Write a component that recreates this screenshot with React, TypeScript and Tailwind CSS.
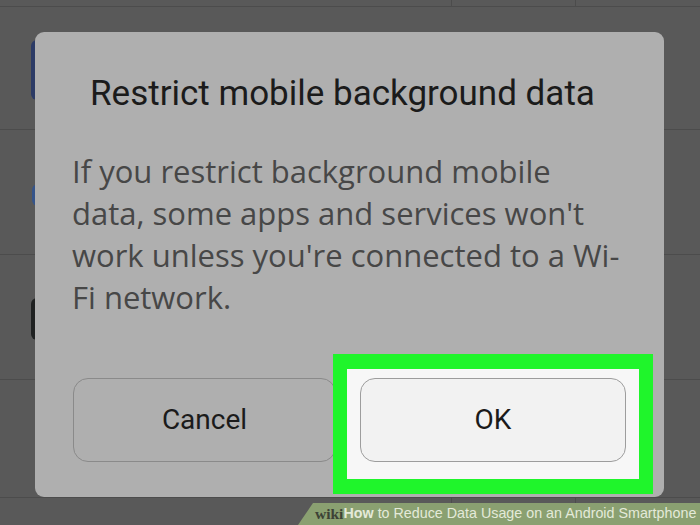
import React from 'react';

const rows = [7, 123, 125, 125, 118];

const App: React.FC = () => {
  return (
    <div className="relative w-[700px] h-[525px] overflow-hidden bg-[#595959] font-['Roboto',sans-serif]">
      {/* background list behind the dialog */}
      <div className="flex flex-col">
        {rows.map((h, i) => (
          <div key={i} className="relative border-b border-[#4c4c4c]" style={{ height: h }}>
            {i === 0 && (
              <div className="flex h-full">
                <div className="w-[451px]" />
                <div className="w-[125px] border-l border-r border-[#4c4c4c]" />
              </div>
            )}
          </div>
        ))}
        <div className="flex h-[30px]">
          <div className="w-[451px]" />
          <div className="w-[125px] border-l border-r border-[#4c4c4c]" />
        </div>
      </div>

      {/* bits of list icons peeking out on the left */}
      <div className="absolute left-[31px] top-[40px] h-[60px] w-[8px] rounded-l-[6px] bg-[#2c3b66]" />
      <div className="absolute left-[32px] top-[184px] h-[22px] w-[8px] rounded-l-[6px] bg-[#35548a]" />
      <div className="absolute left-[31px] top-[298px] h-[42px] w-[8px] rounded-l-[6px] bg-[#1f2121]" />

      {/* dialog */}
      <div className="absolute left-[35px] top-[32px] w-[629px] h-[465px] rounded-[9px] bg-[#afafaf] flex flex-col">
        <div className="pl-[55px] pt-[42px] text-[35px] leading-[40px] text-[#1b1b1b]">
          Restrict mobile background data
        </div>
        <div className="pl-[37px] pr-[38px] pt-[36px] font-['Open_Sans',sans-serif] text-[31px] leading-[42px] text-[#474747]">
          If you restrict background mobile data, some apps and services won't work unless you're connected to a Wi-Fi network.
        </div>
        <div className="mt-auto mb-[3px] flex items-start pl-[38px]">
          <button className="mt-[24px] w-[263px] h-[84px] rounded-[15px] border border-[#8a8a8a] bg-[#afafaf] text-[28px] text-[#1b1b1b]">
            Cancel
          </button>
          <div className="relative z-10 ml-[-3px] w-[320px] h-[140px] border-[14px] border-b-[15px] border-t-[15px] border-[#1ff52b] bg-[#f7f7f7] pl-[13px] pt-[9px]">
            <button className="w-[266px] h-[84px] rounded-[15px] border border-[#9d9d9d] bg-[#f2f2f2] text-[28px] text-[#1b1b1b]">
              OK
            </button>
          </div>
        </div>
      </div>

      {/* wikiHow banner */}
      <div className="absolute bottom-0 right-0 h-[22px] w-[402px] bg-[#8aa071] [clip-path:polygon(15px_0,100%_0,100%_100%,0_100%)] flex items-center pl-[17px] whitespace-nowrap font-['Liberation_Sans',sans-serif] text-[14.3px]">
        <span className="font-['Liberation_Serif',serif] font-bold text-[15.5px] text-[#3d4236]">wiki</span>
        <span className="font-bold text-[#e4ead9]">How</span>
        <span className="ml-[4px] text-[#e4ead9]">to Reduce Data Usage on an Android Smartphone</span>
      </div>
    </div>
  );
};

export default App;
